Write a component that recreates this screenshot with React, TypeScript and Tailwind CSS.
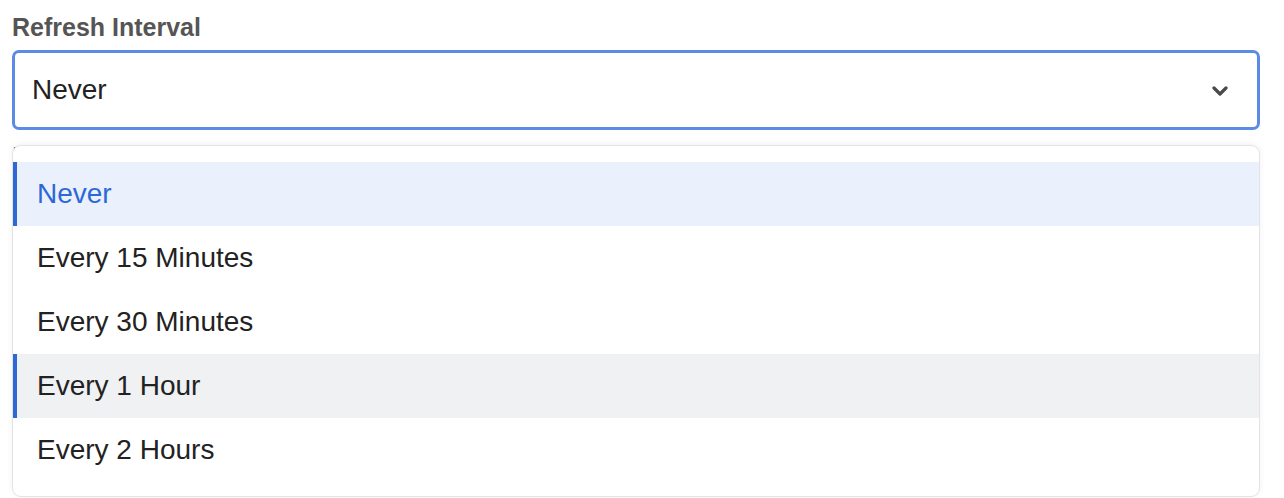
import React from "react";

const items = ["Never", "Every 15 Minutes", "Every 30 Minutes", "Every 1 Hour", "Every 2 Hours"];

export default function App() {
  return (
    <div className="w-[1284px] h-[498px] bg-white overflow-hidden" style={{ fontFamily: '"Liberation Sans", Arial, sans-serif' }}>
      <div className="relative px-[12px] pt-[12px]">
        <div className="text-[25px] leading-[30px] font-bold text-[#555555]">Refresh Interval</div>
        <div className="mt-[8px] h-[80px] w-[1248px] rounded-[7px] border-[3px] border-[#5b8be4] flex items-center justify-between pl-[18px] pr-[29px]">
          <span className="text-[28px] text-[#222222] -ml-[1px]">Never</span>
          <svg width="16" height="10" viewBox="0 0 16 10" className="mt-[2px]">
            <path d="M2 2 L8 8 L14 2" fill="none" stroke="#4a4a4a" strokeWidth="3.2" strokeLinecap="round" strokeLinejoin="round" />
          </svg>
        </div>
        <div className="mt-[11px] text-[24px] leading-[30px] text-[#777777]">
          How often the data should be refreshed from the source automatically.
        </div>
        <div className="absolute left-[12px] top-[145px] w-[1248px] h-[352px] bg-white rounded-[9px] border border-[#e4e4e4] shadow-[0_-1px_6px_rgba(0,0,0,0.06)] pt-[16px]">
          {items.map((it, i) => {
            const active = i === 0;
            const hover = i === 3;
            return (
              <div
                key={it}
                className={
                  "h-[64px] flex items-center pl-[20px] text-[28px] border-l-[4px] " +
                  (active
                    ? "bg-[#eaf1fd] text-[#2d68d6] border-[#2d68d6]"
                    : hover
                    ? "bg-[#f0f1f3] text-[#222222] border-[#2d68d6]"
                    : "text-[#222222] border-transparent")
                }
              >
                {it}
              </div>
            );
          })}
        </div>
      </div>
    </div>
  );
}
